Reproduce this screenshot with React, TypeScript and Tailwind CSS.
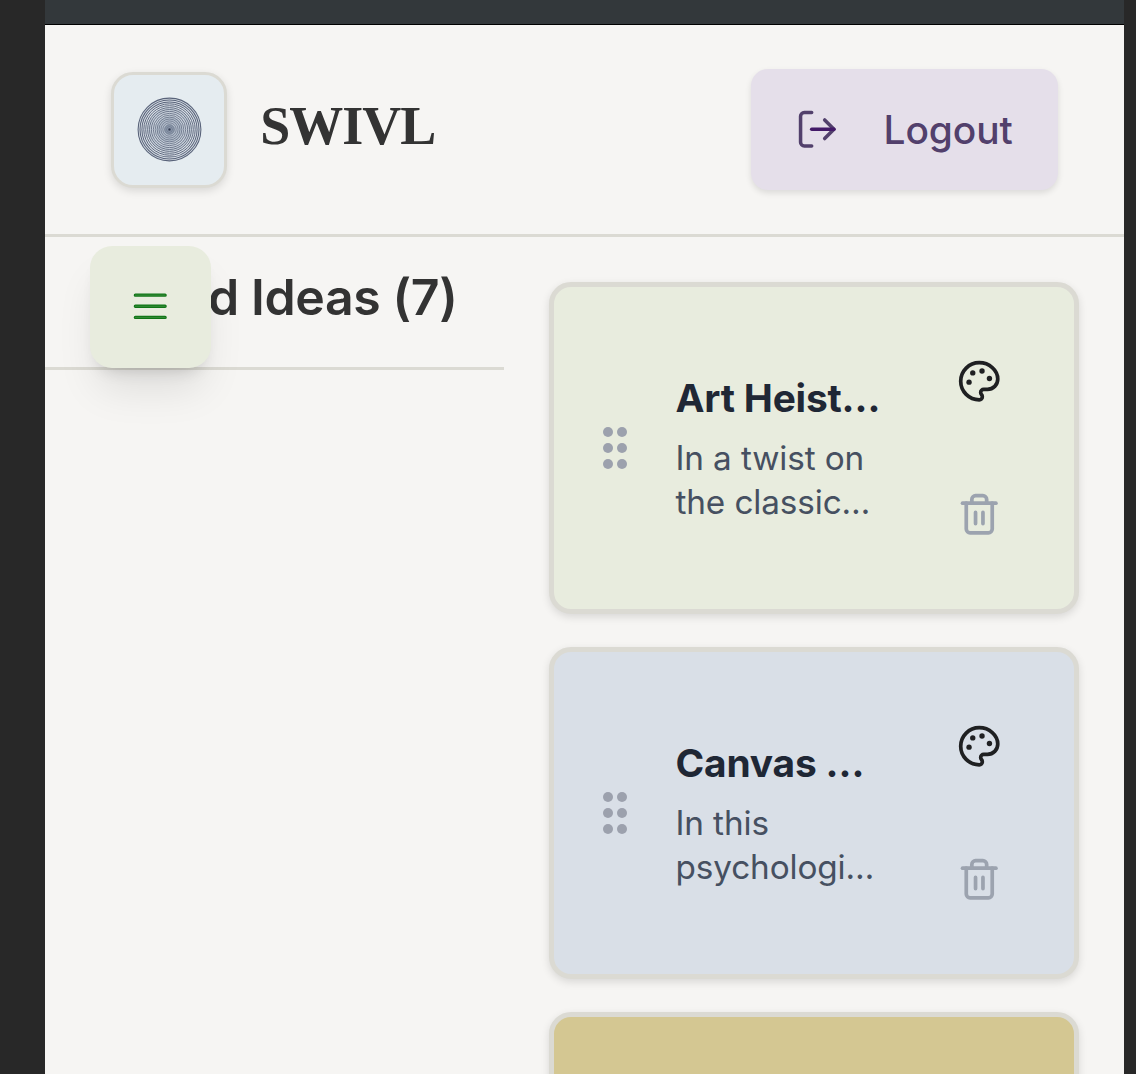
import React from "react";

function Icon({ strokeWidth = 2, className = "", children }: { strokeWidth?: number; className?: string; children: React.ReactNode }) {
  return (
    <svg
      width="44.5"
      height="44.5"
      viewBox="0 0 24 24"
      fill="none"
      stroke="currentColor"
      strokeWidth={strokeWidth}
      strokeLinecap="round"
      strokeLinejoin="round"
      className={className}
    >
      {children}
    </svg>
  );
}

function LogoutIcon() {
  return (
    <Icon className="shrink-0" strokeWidth={1.9}>
      <path d="M9 21H5a2 2 0 0 1-2-2V5a2 2 0 0 1 2-2h4" />
      <path d="m16 17 5-5-5-5" />
      <path d="M21 12H9" stroke="#431a68" />
    </Icon>
  );
}

function MenuIcon() {
  return (
    <Icon className="-mt-0.5" strokeWidth={1.85}>
      <path d="M4 6h16M4 12h16M4 18h16" />
      <path d="M4 6h16M4 12h16M4 18h16" stroke="#4f9a4f" strokeWidth=".35" />
    </Icon>
  );
}

function PaletteIcon() {
  return (
    <Icon className="text-[#1f2022]">
      <g fill="currentColor" stroke="none">
        <circle cx="13.5" cy="6.5" r="1.45" />
        <circle cx="17.5" cy="10.5" r="1.45" />
        <circle cx="8.5" cy="7.5" r="1.45" />
        <circle cx="6.5" cy="12.5" r="1.45" />
      </g>
      <path d="M12 2C6.5 2 2 6.5 2 12s4.5 10 10 10c.926 0 1.648-.746 1.648-1.688 0-.437-.18-.835-.437-1.125-.29-.289-.438-.652-.438-1.125a1.64 1.64 0 0 1 1.668-1.668h1.996c3.051 0 5.555-2.503 5.555-5.554C21.965 6.012 17.461 2 12 2z" />
    </Icon>
  );
}

function TrashIcon() {
  return (
    <Icon className="text-[#9ca3af]">
      <path d="M3 6h18" />
      <path d="M19 6v14c0 1-1 2-2 2H7c-1 0-2-1-2-2V6" />
      <path d="M8 6V4c0-1 1-2 2-2h4c1 0 2 1 2 2v2" />
      <path d="M10 11v6M14 11v6" />
    </Icon>
  );
}

const rings = Array.from({ length: 17 }, (_, i) => 1 + i * 1.9);

function Logo() {
  return (
    <svg width="65" height="65" viewBox="0 0 65 65" fill="none" stroke="#59637a">
      <circle cx="32.5" cy="32.5" r="31" fill="#8c9bb0" fillOpacity=".15" stroke="none" />
      <circle cx="32.5" cy="32.5" r="22" fill="#8c9bb0" fillOpacity=".2" stroke="none" />
      <circle cx="32.5" cy="32.5" r="13" fill="#8c9bb0" fillOpacity=".35" stroke="none" />
      <circle cx="32.5" cy="32.5" r="5" fill="#68758e" fillOpacity=".5" stroke="none" />
      <circle cx="32.5" cy="32.5" r="1.2" fill="#333c52" stroke="none" />
      {rings.map((r) => (
        <circle key={r} cx="32.5" cy="32.5" r={r} strokeWidth={0.45 + r * 0.02} />
      ))}
    </svg>
  );
}

type Idea = { title: string; lines: string[]; color: string };

const ideas: Idea[] = [
  { title: "Art Heist…", lines: ["In a twist on", "the classic…"], color: "bg-[#e8ecde]" },
  { title: "Canvas …", lines: ["In this", "psychologi…"], color: "bg-[#d9dfe7]" },
  { title: "", lines: [], color: "bg-[#d4c792]" },
];

function IdeaCard({ title, lines, color }: Idea) {
  return (
    <article
      className={`flex h-[332px] w-[530.5px] shrink-0 items-center rounded-[22px] border-[5.5px] border-[#dbdad3] pl-[49.5px] shadow-[0_3px_8px_rgba(0,0,0,0.12)] ${color}`}
    >
      {title && (
        <>
          <div className="-mt-px grid w-6 shrink-0 grid-cols-2 gap-x-1 gap-y-1.5">
            {[0, 1, 2, 3, 4, 5].map((n) => (
              <span key={n} className="size-2.5 rounded-full bg-[#9ca1ad]" />
            ))}
          </div>
          <div className="ml-[48.5px] w-[256px] shrink-0 pb-[2px]">
            <h3 className="text-[38.9px] leading-[56px] font-bold tracking-[-0.2px] whitespace-nowrap text-[#1f2735]">{title}</h3>
            <p className="mt-[10px] text-[33.3px] leading-[44.5px] tracking-[-0.12px] text-[#465061]">
              {lines.map((line) => (
                <span key={line} className="block whitespace-nowrap">{line}</span>
              ))}
            </p>
          </div>
          <div className="-mt-px ml-[25.5px] flex flex-col gap-[88px]">
            <PaletteIcon />
            <TrashIcon />
          </div>
        </>
      )}
    </article>
  );
}

export default function App() {
  return (
    <div className="h-[1074px] w-[1136px] overflow-hidden bg-[#282828] pr-[12px] pl-[45px] font-['Inter',sans-serif]">
      <div className="h-[25px] border-b border-black bg-[#33383b]" />
      <div className="h-[1049px] overflow-hidden bg-[#f6f5f3]">
        <header className="flex h-[212px] items-center justify-between border-b-[3px] border-[#dbdad3] pr-[66px] pl-[66.3px]">
          <div className="flex items-center">
            <div className="flex size-[116px] items-center justify-center rounded-[22px] border-[3px] border-[#dbdad3] bg-[#e5ecf0] shadow-[0_3px_8px_rgba(0,0,0,0.12)]">
              <Logo />
            </div>
            <h1 className="ml-[33px] pb-[7px] font-['Liberation_Serif',serif] text-[54px] leading-none font-bold tracking-[-1px] text-[#333333]">SWIVL</h1>
          </div>
          <button className="flex h-[121.5px] w-[307px] items-center rounded-[17px] bg-[#e5dfea] pl-[43.5px] text-[38.9px] font-medium tracking-[-0.1px] text-[#52406c] shadow-[0_3px_6px_rgba(0,0,0,0.11)]">
            <LogoutIcon />
            <span className="ml-[44.5px] pt-px">Logout</span>
          </button>
        </header>
        <div className="flex">
          <aside className="relative w-[459px] shrink-0">
            <div className="flex h-[133px] items-center justify-end border-b-[3px] border-[#dbdad3] pr-[46.5px] pb-[10px]">
              <h2 className="text-[50px] font-semibold tracking-[-0.4px] whitespace-nowrap text-[#333333]">Saved Ideas (7)</h2>
            </div>
            <button className="absolute top-[9px] left-[44.5px] flex h-[121.5px] w-[121.5px] items-center justify-center rounded-[22px] bg-[#e8ecde] text-[#0f7516] shadow-[0_28px_42px_-8px_rgba(0,0,0,0.1),0_11px_17px_-11px_rgba(0,0,0,0.2)]">
              <MenuIcon />
            </button>
          </aside>
          <main className="flex flex-col gap-[33px] pt-[45px] pl-[44.5px]">
            {ideas.map((idea) => (
              <IdeaCard key={idea.color} {...idea} />
            ))}
          </main>
        </div>
      </div>
    </div>
  );
}
